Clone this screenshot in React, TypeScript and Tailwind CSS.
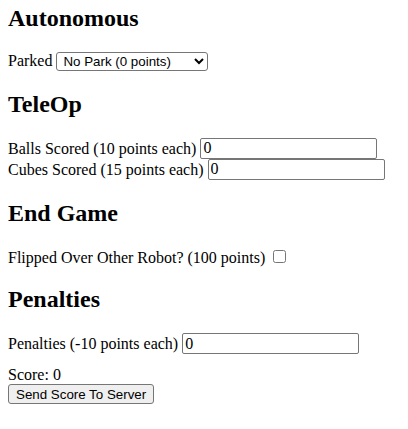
import { useState } from "react";

const h2Class = "text-[24px] font-bold leading-[normal] my-[19.92px]";
const inputClass =
  "w-[177px] h-[21px] border border-[#767676] rounded-[2px] px-[2px] py-0 text-[16px] leading-[normal] font-['Liberation_Serif',serif] bg-white align-baseline";

export default function App() {
  const [park, setPark] = useState("0");
  const [balls, setBalls] = useState("0");
  const [cubes, setCubes] = useState("0");
  const [flipped, setFlipped] = useState(false);
  const [penalties, setPenalties] = useState("0");

  return (
    <div className="px-[8px] pb-[8px] font-['Liberation_Serif',serif] text-[16px] leading-[normal] text-black bg-white">
      {/* Autonomous */}
      <h2 className={h2Class + " !mt-[5px]"}>Autonomous</h2>
      <p className="my-[16px]">
        Parked{" "}
        <select
          className="w-[152px] h-[19px] border border-[#767676] rounded-[3px] bg-white pl-[2px] text-[13.33px] font-['Liberation_Sans',Arial,sans-serif] align-baseline"
          value={park}
          onChange={(e) => setPark(e.target.value)}
        >
          <option value="0">No Park (0 points)</option>
          <option value="10">Partial Park (10 points)</option>
          <option value="20">Full Park (20 points)</option>
        </select>
      </p>

      {/* TeleOp */}
      <h2 className={h2Class}>TeleOp</h2>
      <p className="my-[16px]">
        Balls Scored (10 points each){" "}
        <input className={inputClass} value={balls} onChange={(e) => setBalls(e.target.value)} />
        <br />
        Cubes Scored (15 points each){" "}
        <input className={inputClass} value={cubes} onChange={(e) => setCubes(e.target.value)} />
      </p>

      {/* End Game */}
      <h2 className={h2Class}>End Game</h2>
      <p className="my-[16px]">
        Flipped Over Other Robot? (100 points){" "}
        <input
          type="checkbox"
          className="w-[13px] h-[13px] mt-[3px] mr-[3px] mb-[3px] ml-[4px] align-baseline"
          checked={flipped}
          onChange={(e) => setFlipped(e.target.checked)}
        />
      </p>

      {/* Penalties */}
      <h2 className={h2Class}>Penalties</h2>
      <p className="mt-[16px] mb-[12px]">
        Penalties (-10 points each){" "}
        <input className={inputClass} value={penalties} onChange={(e) => setPenalties(e.target.value)} />
      </p>

      <div>Score: 0</div>
      <button className="block h-[20px] border border-[#767676] rounded-[3px] bg-[#efefef] px-[7px] text-[13.33px] leading-[normal] font-['Liberation_Sans',Arial,sans-serif]">
        Send Score To Server
      </button>
    </div>
  );
}
